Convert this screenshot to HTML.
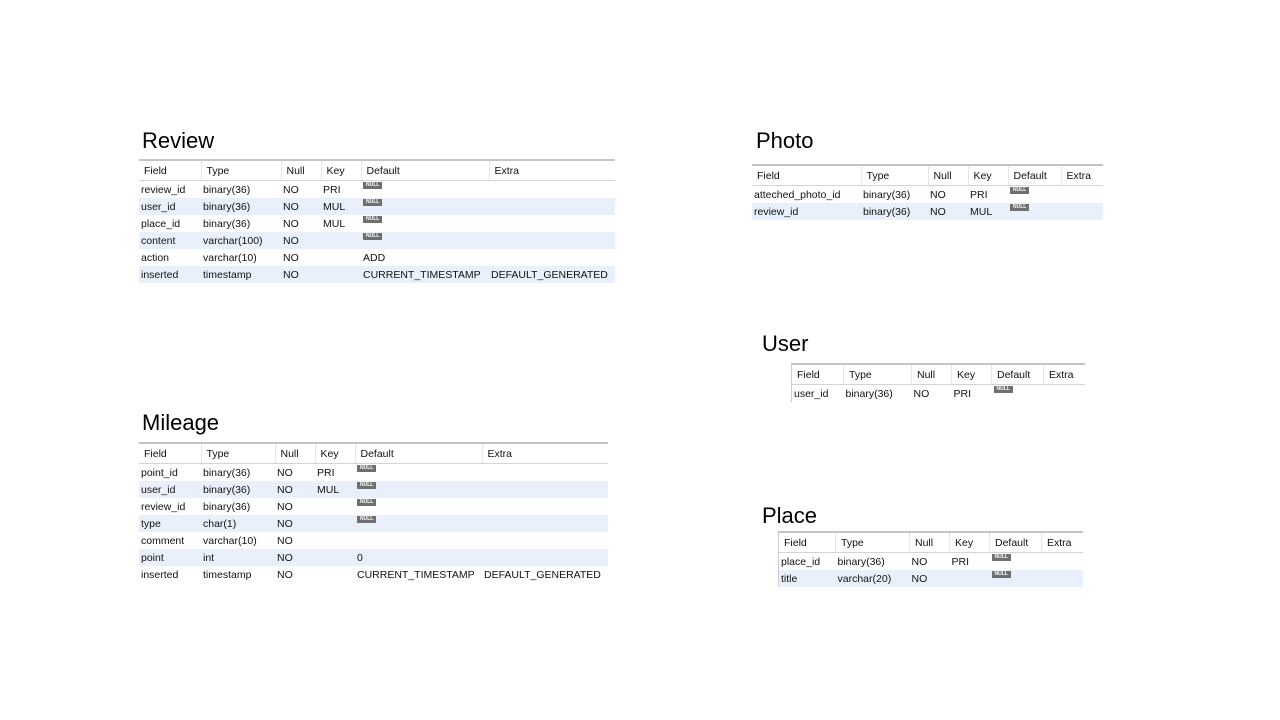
<!DOCTYPE html>
<html><head><meta charset="utf-8"><style>
body{margin:0;width:1280px;height:720px;background:#fff;position:relative;overflow:hidden;font-family:"Liberation Sans",sans-serif;color:#111}
.t{position:absolute;font-size:22px;color:#000}
table{position:absolute;border-collapse:collapse;table-layout:fixed;font-size:10.5px}
th{font-weight:normal;text-align:left;height:19px;padding:0 0 0 5px;border-top:2px solid #c4c4c4;border-bottom:1px solid #d4d4d4;border-left:1px solid #e6e6e6;white-space:nowrap;overflow:hidden}
th:first-child{border-left:none}
td{height:17px;padding:0 0 0 2px;white-space:nowrap;overflow:hidden;vertical-align:middle;position:relative}
tbody tr:nth-child(even) td{background:#e9f0fb}
.n{position:absolute;left:2px;top:1px;background:#6f6f6f;color:#fff;font-size:5px;font-weight:bold;line-height:7px;padding:0 3px}
</style></head><body>

<div class="t" style="left:142px;top:128px">Review</div>
<table style="left:139px;top:159px;width:476px">
<colgroup><col style="width:62px"><col style="width:80px"><col style="width:40px"><col style="width:40px"><col style="width:128px"><col></colgroup>
<thead><tr><th>Field</th><th>Type</th><th>Null</th><th>Key</th><th>Default</th><th>Extra</th></tr></thead>
<tbody>
<tr><td>review_id</td><td>binary(36)</td><td>NO</td><td>PRI</td><td><span class="n">NULL</span></td><td></td></tr>
<tr><td>user_id</td><td>binary(36)</td><td>NO</td><td>MUL</td><td><span class="n">NULL</span></td><td></td></tr>
<tr><td>place_id</td><td>binary(36)</td><td>NO</td><td>MUL</td><td><span class="n">NULL</span></td><td></td></tr>
<tr><td>content</td><td>varchar(100)</td><td>NO</td><td></td><td><span class="n">NULL</span></td><td></td></tr>
<tr><td>action</td><td>varchar(10)</td><td>NO</td><td></td><td>ADD</td><td></td></tr>
<tr><td>inserted</td><td>timestamp</td><td>NO</td><td></td><td>CURRENT_TIMESTAMP</td><td>DEFAULT_GENERATED</td></tr>
</tbody></table>

<div class="t" style="left:142px;top:410px">Mileage</div>
<table style="left:139px;top:442px;width:469px">
<colgroup><col style="width:62px"><col style="width:74px"><col style="width:40px"><col style="width:40px"><col style="width:127px"><col></colgroup>
<thead><tr><th>Field</th><th>Type</th><th>Null</th><th>Key</th><th>Default</th><th>Extra</th></tr></thead>
<tbody>
<tr><td>point_id</td><td>binary(36)</td><td>NO</td><td>PRI</td><td><span class="n">NULL</span></td><td></td></tr>
<tr><td>user_id</td><td>binary(36)</td><td>NO</td><td>MUL</td><td><span class="n">NULL</span></td><td></td></tr>
<tr><td>review_id</td><td>binary(36)</td><td>NO</td><td></td><td><span class="n">NULL</span></td><td></td></tr>
<tr><td>type</td><td>char(1)</td><td>NO</td><td></td><td><span class="n">NULL</span></td><td></td></tr>
<tr><td>comment</td><td>varchar(10)</td><td>NO</td><td></td><td></td><td></td></tr>
<tr><td>point</td><td>int</td><td>NO</td><td></td><td>0</td><td></td></tr>
<tr><td>inserted</td><td>timestamp</td><td>NO</td><td></td><td>CURRENT_TIMESTAMP</td><td>DEFAULT_GENERATED</td></tr>
</tbody></table>

<div class="t" style="left:756px;top:128px">Photo</div>
<table style="left:752px;top:164px;width:351px">
<colgroup><col style="width:109px"><col style="width:67px"><col style="width:40px"><col style="width:40px"><col style="width:53px"><col></colgroup>
<thead><tr><th>Field</th><th>Type</th><th>Null</th><th>Key</th><th>Default</th><th>Extra</th></tr></thead>
<tbody>
<tr><td>atteched_photo_id</td><td>binary(36)</td><td>NO</td><td>PRI</td><td><span class="n">NULL</span></td><td></td></tr>
<tr><td>review_id</td><td>binary(36)</td><td>NO</td><td>MUL</td><td><span class="n">NULL</span></td><td></td></tr>
</tbody></table>

<div class="t" style="left:762px;top:331px">User</div>
<table style="left:791px;top:363px;width:294px;border-left:1px solid #ccc">
<colgroup><col style="width:52px"><col style="width:68px"><col style="width:40px"><col style="width:40px"><col style="width:52px"><col></colgroup>
<thead><tr><th>Field</th><th>Type</th><th>Null</th><th>Key</th><th>Default</th><th>Extra</th></tr></thead>
<tbody>
<tr><td>user_id</td><td>binary(36)</td><td>NO</td><td>PRI</td><td><span class="n">NULL</span></td><td></td></tr>
</tbody></table>

<div class="t" style="left:762px;top:503px">Place</div>
<table style="left:778px;top:531px;width:305px;border-left:1px solid #ccc">
<colgroup><col style="width:57px"><col style="width:74px"><col style="width:40px"><col style="width:40px"><col style="width:52px"><col></colgroup>
<thead><tr><th>Field</th><th>Type</th><th>Null</th><th>Key</th><th>Default</th><th>Extra</th></tr></thead>
<tbody>
<tr><td>place_id</td><td>binary(36)</td><td>NO</td><td>PRI</td><td><span class="n">NULL</span></td><td></td></tr>
<tr><td>title</td><td>varchar(20)</td><td>NO</td><td></td><td><span class="n">NULL</span></td><td></td></tr>
</tbody></table>

</body></html>
